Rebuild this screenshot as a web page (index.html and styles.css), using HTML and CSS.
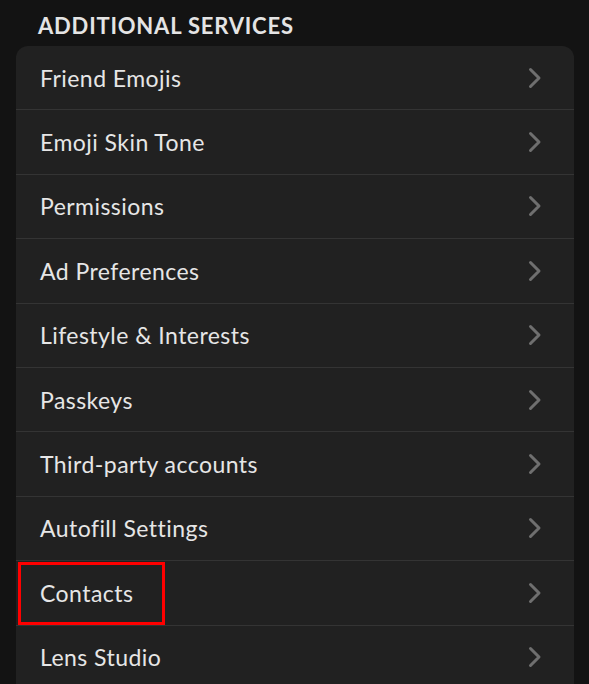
FILE: index.html
```html
<!DOCTYPE html>
<html>
<head>
<meta charset="utf-8">
<link rel="stylesheet" href="styles.css">
</head>
<body>
<div class="page">
  <h2 class="section-title">ADDITIONAL SERVICES</h2>
  <div class="card">
    <div class="row"><span class="label">Friend Emojis</span><svg class="chev" viewBox="0 0 14 22"><path d="M2.5 2.5 L11 11 L2.5 19.5"/></svg></div>
    <div class="row"><span class="label">Emoji Skin Tone</span><svg class="chev" viewBox="0 0 14 22"><path d="M2.5 2.5 L11 11 L2.5 19.5"/></svg></div>
    <div class="row"><span class="label">Permissions</span><svg class="chev" viewBox="0 0 14 22"><path d="M2.5 2.5 L11 11 L2.5 19.5"/></svg></div>
    <div class="row"><span class="label">Ad Preferences</span><svg class="chev" viewBox="0 0 14 22"><path d="M2.5 2.5 L11 11 L2.5 19.5"/></svg></div>
    <div class="row"><span class="label">Lifestyle &amp; Interests</span><svg class="chev" viewBox="0 0 14 22"><path d="M2.5 2.5 L11 11 L2.5 19.5"/></svg></div>
    <div class="row"><span class="label">Passkeys</span><svg class="chev" viewBox="0 0 14 22"><path d="M2.5 2.5 L11 11 L2.5 19.5"/></svg></div>
    <div class="row"><span class="label">Third-party accounts</span><svg class="chev" viewBox="0 0 14 22"><path d="M2.5 2.5 L11 11 L2.5 19.5"/></svg></div>
    <div class="row"><span class="label">Autofill Settings</span><svg class="chev" viewBox="0 0 14 22"><path d="M2.5 2.5 L11 11 L2.5 19.5"/></svg></div>
    <div class="row highlighted"><span class="label">Contacts</span><svg class="chev" viewBox="0 0 14 22"><path d="M2.5 2.5 L11 11 L2.5 19.5"/></svg></div>
    <div class="row"><span class="label">Lens Studio</span><svg class="chev" viewBox="0 0 14 22"><path d="M2.5 2.5 L11 11 L2.5 19.5"/></svg></div>
  </div>
</div>
</body>
</html>
```

FILE: styles.css
```css
html, body {
  margin: 0;
  padding: 0;
  background: #131313;
  overflow: hidden;
  height: 684px;
}
.page {
  padding: 0 15px 0 16px;
  font-family: "Lato", "Noto Sans", sans-serif;
}
.section-title {
  margin: 0;
  padding: 13px 0 0 22px;
  height: 46px;
  box-sizing: border-box;
  font-size: 22px;
  font-weight: 700;
  color: #e4e4e4;
  letter-spacing: 0.8px;
  line-height: 26px;
}
.card {
  background: #212121;
  border-radius: 12px;
  overflow: hidden;
  padding-bottom: 40px;
}
.row {
  position: relative;
  display: flex;
  align-items: center;
  justify-content: space-between;
  height: 63.4px;
  padding: 0 32px 0 24px;
  border-bottom: 1px solid #343434;
}
.label {
  font-size: 23px;
  color: #e6e6e6;
  letter-spacing: 0.45px;
}
.chev {
  width: 14px;
  height: 22px;
  fill: none;
  stroke: #6f6f6f;
  stroke-width: 3;
  stroke-linecap: round;
  stroke-linejoin: round;
}
.highlighted::after {
  content: "";
  position: absolute;
  left: 2px;
  top: 1px;
  width: 141px;
  height: 57px;
  border: 3px solid #ff0000;
}
```
